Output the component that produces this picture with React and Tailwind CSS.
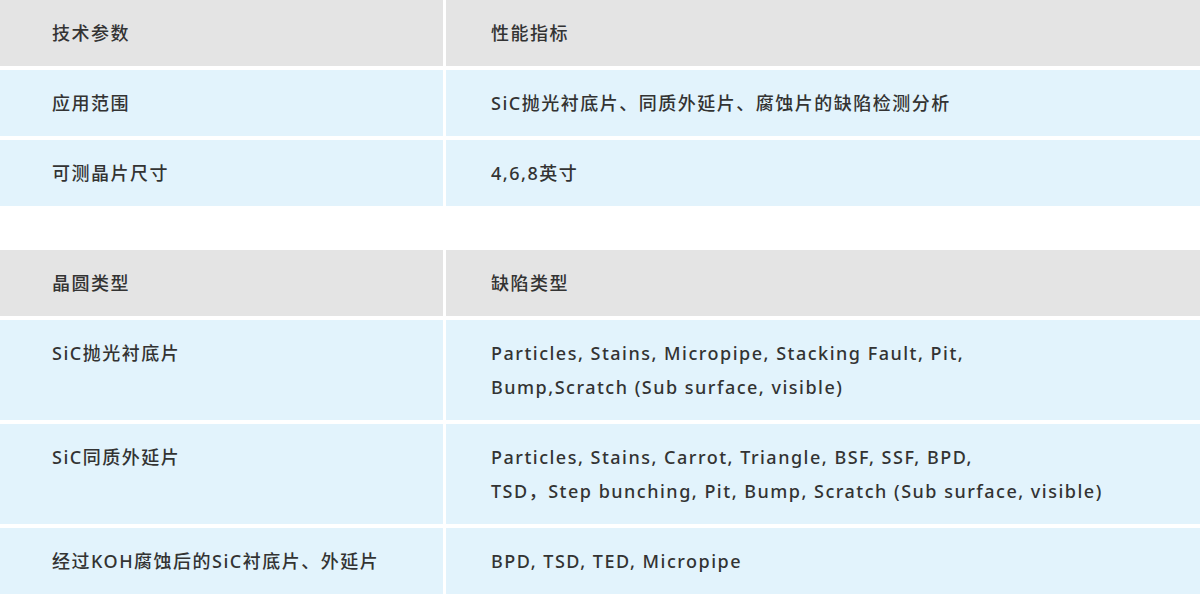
import React from "react";

const font = { fontFamily: '"Noto Sans", "Noto Sans CJK SC", sans-serif' };

const Cell = ({ children, head, right }) => (
  <div
    className={`${head ? "bg-[#e4e4e4]" : "bg-[#e2f3fc]"} ${
      right ? "pl-[45px]" : "pl-[52px]"
    } py-4 text-[18px] font-medium leading-[34px] tracking-[1.5px] text-[#333]`}
  >
    {children}
  </div>
);

const Table = ({ rows }) => (
  <div className="grid grid-cols-[443px_1fr] gap-x-[3px] gap-y-[4px]">
    {rows.map((r, i) => (
      <React.Fragment key={i}>
        <Cell head={i === 0}>{r[0]}</Cell>
        <Cell head={i === 0} right>
          {r[1]}
        </Cell>
      </React.Fragment>
    ))}
  </div>
);

const App = () => {
  const specs = [
    ["技术参数", "性能指标"],
    ["应用范围", "SiC抛光衬底片、同质外延片、腐蚀片的缺陷检测分析"],
    ["可测晶片尺寸", "4,6,8英寸"],
  ];
  const defects = [
    ["晶圆类型", "缺陷类型"],
    [
      "SiC抛光衬底片",
      <>
        Particles, Stains, Micropipe, Stacking Fault, Pit,
        <br />
        Bump,Scratch (Sub surface, visible)
      </>,
    ],
    [
      "SiC同质外延片",
      <>
        Particles, Stains, Carrot, Triangle, BSF, SSF, BPD,
        <br />
        TSD，Step bunching, Pit, Bump, Scratch (Sub surface, visible)
      </>,
    ],
    ["经过KOH腐蚀后的SiC衬底片、外延片", "BPD, TSD, TED, Micropipe"],
  ];

  return (
    <div className="w-[1200px] h-[594px] overflow-hidden bg-white" style={font}>
      <Table rows={specs} />
      <div className="h-[44px]" />
      <Table rows={defects} />
    </div>
  );
};

export default App;
